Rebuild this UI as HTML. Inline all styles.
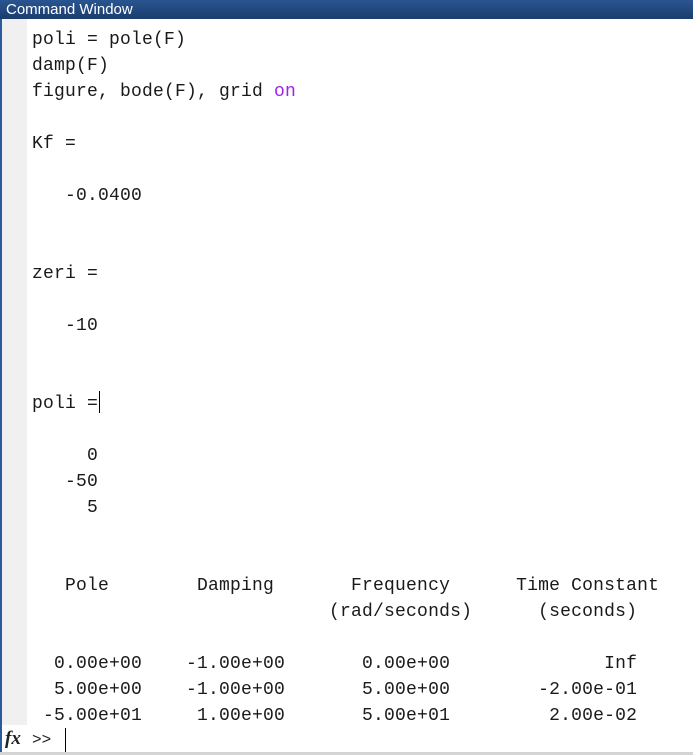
<!DOCTYPE html>
<html><head><style>
body{margin:0;width:693px;height:755px;overflow:hidden;background:#fff;position:relative;font-family:"Liberation Sans",sans-serif}
#title{position:absolute;left:0;top:0;width:693px;height:19px;background:linear-gradient(#2a5590,#1b3d6e);color:#fff;font-size:15px;line-height:19px;padding-left:6px;box-sizing:border-box;z-index:2}
#lb{position:absolute;left:0;top:19px;width:2px;height:736px;background:#2b5b9a}
#gut{position:absolute;left:2px;top:19px;width:25px;height:706px;background:#f0f0f0}
pre{position:absolute;left:32px;top:1px;margin:0;font-family:"Liberation Mono",monospace;font-size:18px;letter-spacing:0.2px;line-height:26px;color:#1a1a1a}
.k{color:#a020f0}
#bot{position:absolute;left:0;top:752px;width:693px;height:3px;background:#d4d4d4}
#fx{position:absolute;left:5px;top:728px;font-family:"Liberation Serif",serif;font-style:italic;font-weight:bold;font-size:19px;color:#222}
#pr{position:absolute;left:32px;top:731px;font-family:"Liberation Mono",monospace;font-size:16px;color:#222}
.cur{position:absolute;width:1px;background:#000}
</style></head><body>
<div id="gut"></div>
<pre> 
poli = pole(F)
damp(F)
figure, bode(F), grid <span class="k">on</span>

Kf =

   -0.0400


zeri =

   -10


poli =

     0
   -50
     5


   Pole        Damping       Frequency      Time Constant
                           (rad/seconds)      (seconds)

  0.00e+00    -1.00e+00       0.00e+00              Inf
  5.00e+00    -1.00e+00       5.00e+00        -2.00e-01
 -5.00e+01     1.00e+00       5.00e+01         2.00e-02</pre>
<div id="title">Command Window</div>
<div id="lb"></div>
<div id="fx">fx</div>
<div id="pr">&gt;&gt;</div>
<div class="cur" style="left:65px;top:728px;height:24px"></div>
<div class="cur" style="left:99px;top:391px;height:22px"></div>
<div id="bot"></div>
</body></html>
